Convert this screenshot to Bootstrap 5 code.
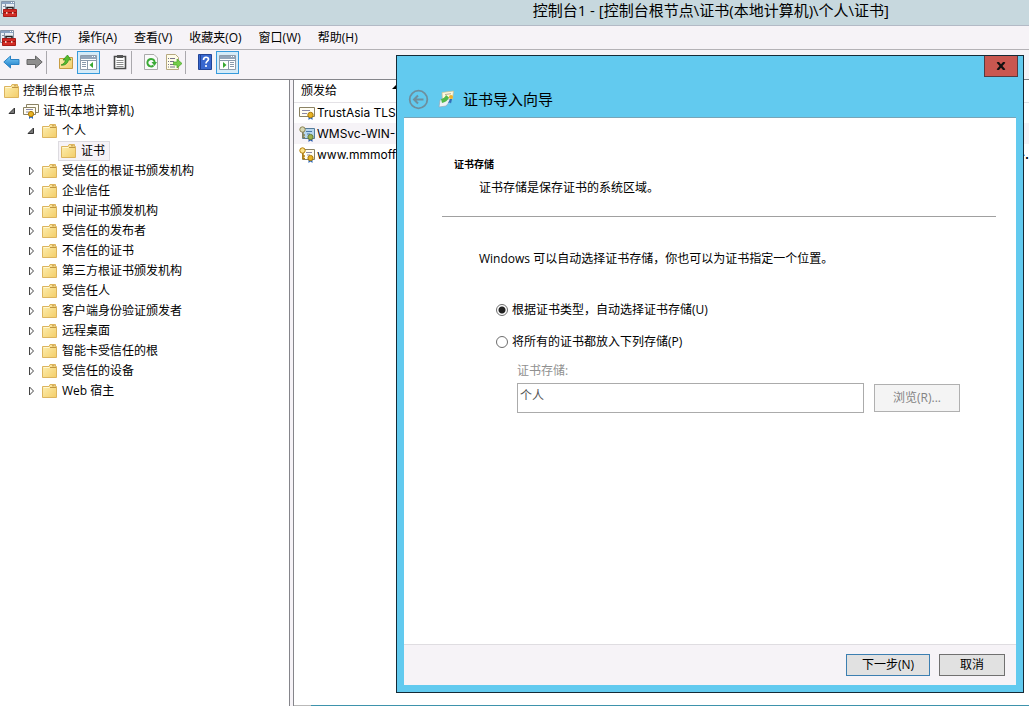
<!DOCTYPE html>
<html lang="zh-CN">
<head>
<meta charset="utf-8">
<meta name="viewport" content="width=device-width, initial-scale=1">
<title>控制台1</title>
<link href="https://cdn.jsdelivr.net/npm/bootstrap@5.3.0/dist/css/bootstrap.min.css" rel="stylesheet">
<style>
  body { font-family: "Open Sans", "Noto Sans CJK SC", sans-serif; font-size: 12px; line-height: 20px; color: #000; background: #fff; }
  button, input { font-family: inherit; }
  svg { display: block; flex: none; }
  .console { min-height: 100vh; }
  .title-strip { height: 26px; padding-left: 1px; background: #c7d8de; border-bottom: 1px solid #b3bac6; }
  .title-text { font-size: 15px; line-height: 20px; margin-right: 140px; }
  .menu-strip { height: 24px; gap: 1px; background: #f6f3f7; border-bottom: 1px solid #b4b2b6; }
  .menu-strip a { color: #000; text-decoration: none; padding: 0 8px; }
  .menu-strip svg { margin-right: -1px; }
  .tool-strip { height: 30px; background: #f6f3f7; border-bottom: 1px solid #85858b; padding-bottom: 5px; }
  .tool { width: 23px; height: 23px; padding: 0; border: 1px solid transparent; background: none; }
  .tool.on { background: #d5ebf8; border-color: #379bdc; }
  .sep { width: 8px; height: 23px; border-left: 1px solid #aaa8ad; }
  .sep.blank { border-color: transparent; }
  .tree-pane { width: 290px; padding-top: 1px; border-right: 1px solid #85858b; }
  .splitter { width: 4px; background: #f6f3f7; border-right: 1px solid #85858b; }
  .tree-pane ul { list-style: none; margin: 0; padding: 0; }
  .tree-pane ul ul { padding-left: 19px; }
  .node { height: 20px; }
  .node > span { padding-left: 5px; }
  .twisty { width: 19px; padding-left: 8px; }
  .picked { width: max-content; margin-left: 20px; padding: 0 4px 0 2px; background: #f6f3f7; border: 1px solid #dddbe0; }
  .cert-table { width: 100%; table-layout: fixed; border-collapse: collapse; white-space: nowrap; }
  .cert-table th { height: 22px; padding: 0 0 0 7px; font-weight: 400; border-bottom: 1px solid #e4e2e6; position: relative; }
  .cert-table td { height: 21px; padding: 0 0 0 5px; line-height: 20px; font-family: Inter, sans-serif; }
  .cert-table td > div { gap: 2px; }
  .cert-table td:last-child { text-align: right; padding: 0; font-weight: 700; }
  .cert-table .alt { background: #f6f3f7; }
  .col-name { width: 210px; }
  .sort { position: absolute; left: 98px; top: 4px; }
  .end-line { height: 1px; background: #3e93ac; border-left: 17px solid #b9b9b9; }
  .wizard { position: absolute; left: 396px; right: 5px; top: 55px; bottom: 13px; background: #62caef; border: 1px solid #152a36; padding: 0 7px 7px; }
  .wizard-head { height: 62px; position: relative; padding: 25px 0 0 4px; border-bottom: 1px solid #77a5b8; }
  .wizard-head h1 { font-size: 15px; line-height: 20px; font-weight: 400; margin: 0; }
  .close-x { position: absolute; right: -2px; top: 0; width: 34px; height: 21px; padding: 0; border: 1px solid #553b42; border-top: 0; background: #c95750; }
  .wizard-body { background: #fff; padding: 38px 20px 0 38px; }
  .wizard-body h2 { font-size: 10px; line-height: 16px; font-weight: 700; margin: 0 0 6px 12px; }
  .hint { margin: 0 0 0 37px; }
  .rule { margin: 18px 0 32px; border: 0; border-top: 1px solid #a0a0a0; opacity: 1; }
  .choices { padding: 31px 0 0 54px; }
  .choices label { padding-left: 4px; }
  .choices input[type=radio] { appearance: none; width: 12px; height: 12px; margin: 0; border: 1px solid #6d6d6d; border-radius: 50%; background: #fff; }
  .choices input[type=radio]:checked { background: radial-gradient(circle, #222 0 3px, #fff 4px); }
  .store { padding: 9px 36px 0 75px; }
  .store > div { gap: 10px; margin-top: 2px; }
  .store label { color: #909090; line-height: 20px; }
  .store-box { height: 30px; border: 1px solid #ababab; background: #fff; color: #555; padding: 0 2px 6px; min-width: 0; border-radius: 0; }
  .cmd { border: 1px solid #707070; background: #e1e1e1; color: #000; height: 22px; width: 66px; padding: 0; line-height: 18px; }
  .cmd.next { width: 84px; border-color: #3c7fb1; }
  .cmd.browse { width: 86px; height: 28px; border-color: #b0b0b0; background: #f4f4f4; color: #838383; }
  .wizard-foot { height: 41px; background: #f6f3f7; border-top: 1px solid #dfdde1; padding: 0 11px 0 0; gap: 9px; }
</style>
</head>
<body>
<svg width="0" height="0" class="position-absolute" aria-hidden="true">
  <defs>
    <linearGradient id="gFolder" x1="0" y1="0" x2="1" y2="1"><stop offset="0" stop-color="#fdf0b4"/><stop offset="1" stop-color="#f3cd68"/></linearGradient>
    <linearGradient id="gBlue" x1="0" y1="0" x2="0" y2="1"><stop offset="0" stop-color="#7fd0fa"/><stop offset="1" stop-color="#1677c4"/></linearGradient>
    <symbol id="folder" viewBox="0 0 15 14"><path d="M.5 2.500h6.500l1-2h5.500v2h1v11H.5z" fill="url(#gFolder)" stroke="#dcb45e"/><path d="M8 3.500h6M10 1.800h2.500" stroke="#b98d3a" stroke-width=".9"/><path d="M1.500 3.500h6" stroke="#fff8d5"/></symbol>
    <symbol id="toolbox" viewBox="0 0 16 18"><path d="M.5 1.500h13v12H.5z" fill="#e9eff5" stroke="#8596a9"/><path d="M1 3h12" stroke="#8ba4c2" stroke-width="2"/><path d="M10 2.500h1M12 2.500h1" stroke="#fff"/><path d="M4.500 4v9M2 6.500h2M2 9.500h2" stroke="#8493a5"/><path d="M6 10V7.500h6V10" fill="none" stroke="#252525" stroke-width="1.500"/><path d="M2.500 9.500h13v7h-13z" fill="#d22b24" stroke="#a81c17"/><path d="M3 12.500h12" stroke="#8f1511"/><path d="M5 12h1.500v2H5zm6 0h1.500v2H11z" fill="#f0c4bb"/></symbol>
    <symbol id="cert" viewBox="0 0 16 16"><path d="M.5 2.500h15v9H.5z" fill="#fffdf3" stroke="#8b8263"/><path d="M3 5.500h8M3 8.500h5" stroke="#8b8aa8"/><path d="M9.500 11v4l2-1.500 2 1.500v-4" fill="#2d68b8"/><circle cx="11.500" cy="10" r="2.700" fill="#e8b324" stroke="#a97908"/></symbol>
    <symbol id="certkey" viewBox="0 0 16 16"><path d="M3.500 2.500h12v10h-12z" fill="#fffdf3" stroke="#8b8263"/><path d="M7 5.500h6M8 8h3" stroke="#8b8aa8"/><path d="M9.500 12v4l2-1.500 2 1.500v-4" fill="#2d68b8"/><circle cx="11.500" cy="11" r="2.600" fill="#e8b324" stroke="#a97908"/><circle cx="3.500" cy="3.500" r="2.700" fill="#fbe28a" stroke="#b37d0c"/><path d="M4 6v6M4 9h2M4 11.500h2" stroke="#b37d0c" stroke-width="1.500"/></symbol>
    <symbol id="certblue" viewBox="0 0 16 16"><path d="M3.500 2.500h12v10h-12z" fill="#b7d6ed" stroke="#557c9a"/><path d="M7 5.500h6M8 8h3" stroke="#4777a7"/><path d="M9.500 12v4l2-1.500 2 1.500v-4" fill="#2458ae"/><circle cx="11.500" cy="11" r="2.600" fill="#9db04d" stroke="#657d34"/><circle cx="3.500" cy="3.500" r="2.700" fill="#d7d7b3" stroke="#8a8354"/><path d="M4 6v6M4 9h2M4 11.500h2" stroke="#8a8354" stroke-width="1.500"/></symbol>
    <symbol id="certs" viewBox="0 0 16 16"><path d="M3.500 1.500h12v8h-12z" fill="#fffdf3" stroke="#8b8263"/><path d="M.5 4.500h12v7H.5z" fill="#fffdf3" stroke="#8b8263"/><path d="M3 6.500h7M3 9h3" stroke="#8b8aa8"/><path d="M6 11v5l2-1.500 2 1.500v-5" fill="#2d68b8"/><circle cx="8" cy="11" r="2.600" fill="#e8b324" stroke="#a97908"/></symbol>
    <symbol id="open" viewBox="0 0 8 8"><path d="M6.500 1v5.500H1z" fill="#777" stroke="#333"/></symbol>
    <symbol id="shut" viewBox="0 0 8 10"><path d="M2.500 1v8L6.500 5z" fill="#fff" stroke="#444"/></symbol>
  </defs>
</svg>

<div class="console d-flex flex-column position-relative">
  <header class="title-strip d-flex align-items-start justify-content-between">
    <svg width="16" height="18"><use href="#toolbox"/></svg>
    <span class="title-text">控制台1 - [控制台根节点\证书(本地计算机)\个人\证书]</span>
  </header>
  <nav class="menu-strip d-flex align-items-center">
    <svg width="16" height="18"><use href="#toolbox"/></svg>
    <a href="#">文件(F)</a><a href="#">操作(A)</a><a href="#">查看(V)</a><a href="#">收藏夹(O)</a><a href="#">窗口(W)</a><a href="#">帮助(H)</a>
  </nav>
  <div class="tool-strip d-flex align-items-center" role="toolbar">
    <button class="tool d-flex align-items-center justify-content-center" aria-label="后退"><svg width="17" height="16" viewBox="0 0 17 16"><path d="M.8 8l6.700-6v3.500H16v5H7.500V14z" fill="url(#gBlue)" stroke="#2a82c4"/></svg></button>
    <button class="tool d-flex align-items-center justify-content-center" aria-label="前进"><svg width="17" height="16" viewBox="0 0 17 16"><path d="M16.200 8l-6.700-6v3.500H1v5h8.500V14z" fill="#8f8f8f" stroke="#666"/></svg></button>
    <span class="sep"></span>
    <button class="tool d-flex align-items-center justify-content-center" aria-label="向上"><svg width="16" height="16" viewBox="0 0 16 16"><path d="M1.500 4.500h6l1.500-1h5.500v11h-13z" fill="url(#gFolder)" stroke="#c79d43"/><path d="M3 11c3-1 4-3 4.500-5L5 6l4.500-5L13 6l-2.500-.2C10 9 7 12 3 11z" fill="#55bb2e" stroke="#2f8a18" stroke-width=".7"/></svg></button>
    <button class="tool on d-flex align-items-center justify-content-center" aria-label="显示控制台树"><svg width="17" height="15" viewBox="0 0 17 15"><path d="M.5.500h16v14H.5z" fill="#fff" stroke="#8f9dac"/><path d="M1 2.500h15" stroke="#93a5b9" stroke-width="3"/><path d="M12 1.500h1M14 1.500h1" stroke="#fff"/><path d="M1 5.500h15M7.500 6v8.500M2 7.500h4M2 9.500h4M2 11.500h4" stroke="#8a9aab"/><path d="M13 7v6L9.500 10z" fill="#37a831"/></svg></button>
    <span class="sep blank"></span>
    <button class="tool d-flex align-items-center justify-content-center" aria-label="粘贴"><svg width="14" height="16" viewBox="0 0 14 16"><path d="M1.500 2.500h11v12h-11z" fill="#fff" stroke="#4b4b4b" stroke-width="1.600"/><path d="M4 1h6v3H4z" fill="#555"/><path d="M3.500 6.500h7M3.500 8.500h7M3.500 10.500h7M3.500 12.500h7" stroke="#8c8c8c"/></svg></button>
    <span class="sep"></span>
    <button class="tool d-flex align-items-center justify-content-center" aria-label="刷新"><svg width="14" height="16" viewBox="0 0 14 16"><path d="M.5.500h9.500l3.500 3.500v11.500H.5z" fill="#fafafa" stroke="#aaa"/><path d="M9.500 11.500A3.700 3.700 0 1 1 10.700 8" fill="none" stroke="#3baa36" stroke-width="2"/><path d="M7.500 8h5.500l-2.500 4z" fill="#3baa36"/></svg></button>
    <button class="tool d-flex align-items-center justify-content-center" aria-label="导出列表"><svg width="16" height="16" viewBox="0 0 16 16"><path d="M.5.500h9l3 3v12H.5z" fill="#fffce9" stroke="#b7a980"/><path d="M2 4.500h1M4 4.500h5M2 7.500h1M4 7.500h4M2 10.500h1M4 10.500h4M2 13h1M4 13h5" stroke="#77728b"/><path d="M7.500 8H11V5l5 4.500-5 4.500v-3H7.500z" fill="#76cd4b" stroke="#49a32a" stroke-width=".7"/></svg></button>
    <span class="sep"></span>
    <button class="tool d-flex align-items-center justify-content-center" aria-label="帮助"><svg width="14" height="16" viewBox="0 0 14 16"><path d="M.5.500h13v15H.5z" fill="#3867cf" stroke="#234496"/><path d="M2.500 1v14" stroke="#203f93"/><path d="M5.500 6c0-3.500 5-3.500 5-.8 0 2-2.500 2-2.500 4.300" fill="none" stroke="#fff" stroke-width="1.700"/><circle cx="8" cy="12" r="1.100" fill="#fff"/></svg></button>
    <button class="tool on d-flex align-items-center justify-content-center" aria-label="显示操作窗格"><svg width="17" height="15" viewBox="0 0 17 15"><path d="M.5.500h16v14H.5z" fill="#fff" stroke="#8f9dac"/><path d="M1 2.500h15" stroke="#93a5b9" stroke-width="3"/><path d="M12 1.500h1M14 1.500h1" stroke="#fff"/><path d="M1 5.500h15M9.500 6v8.500M11 7.500h4M11 9.500h4M11 11.500h4" stroke="#8a9aab"/><path d="M4 7v6l3.500-3z" fill="#37a831"/></svg></button>
  </div>

  <main class="d-flex flex-grow-1">
    <aside class="tree-pane flex-shrink-0">
      <div class="node d-flex align-items-center ps-1"><svg width="15" height="14"><use href="#folder"/></svg><span class="ps-1">控制台根节点</span></div>
      <ul>
        <li>
          <div class="node d-flex align-items-center"><i class="twisty me-1"><svg width="8" height="8"><use href="#open"/></svg></i><svg width="16" height="16"><use href="#certs"/></svg><span class="ps-1">证书(本地计算机)</span></div>
          <ul id="stores">
            <li>
              <div class="node d-flex align-items-center"><i class="twisty me-1"><svg width="8" height="8"><use href="#open"/></svg></i><svg width="15" height="14"><use href="#folder"/></svg><span>个人</span></div>
              <ul><li><div class="node picked d-flex align-items-center"><svg width="15" height="14"><use href="#folder"/></svg><span>证书</span></div></li></ul>
            </li>
          </ul>
        </li>
      </ul>
    </aside>
    <div class="splitter flex-shrink-0"></div>
    <section class="d-flex flex-column flex-grow-1">
      <table class="cert-table">
        <thead><tr><th class="col-name">颁发给<svg class="sort" width="10" height="5"><path d="M0 5l5-5 5 5z"/></svg></th><th></th></tr></thead>
        <tbody>
          <tr><td><div class="d-flex align-items-center"><svg width="16" height="16"><use href="#cert"/></svg>TrustAsia TLS</div></td><td></td></tr>
          <tr class="alt"><td><div class="d-flex align-items-center"><svg width="16" height="16"><use href="#certblue"/></svg>WMSvc-WIN-</div></td><td></td></tr>
          <tr><td><div class="d-flex align-items-center"><svg width="16" height="16"><use href="#certkey"/></svg>www.mmmoff</div></td><td>-.</td></tr>
        </tbody>
      </table>
      <div class="end-line mt-auto"></div>
    </section>
  </main>

  <form class="wizard d-flex flex-column" role="dialog" aria-labelledby="wizardTitle">
    <div class="wizard-head d-flex align-items-center">
      <svg width="21" height="21" viewBox="0 0 21 21" class="me-2"><circle cx="10.500" cy="10.500" r="8.800" fill="none" stroke="#6e8f9e" stroke-width="1.800"/><path d="M15.500 10.500h-9M10 6.500l-4 4 4 4" fill="none" stroke="#6e8f9e" stroke-width="2"/></svg>
      <svg width="18" height="18" viewBox="0 0 18 18" class="me-1"><path d="M5 2.500l11.500-1.500-1 8-10 1.500z" fill="#fff8dd" stroke="#c9bf91" stroke-width=".7"/><path d="M8 4.500l6-.8" stroke="#b5ae97"/><path d="M3 10l6-2 5 2-5 6-7 1z" fill="#eef2f5" stroke="#8fa9b9" stroke-width=".7"/><path d="M4 9c3-.5 4-2 5-4l3 2.500c-1 3-4 5-7 5.500z" fill="#52b94a"/><circle cx="14" cy="7" r="2" fill="#eeb22b"/><path d="M13 9l-2 4 2-.5 1 1 1-4.500" fill="#326eb8"/></svg>
      <h1 id="wizardTitle" class="ps-1">证书导入向导</h1>
      <button type="button" class="close-x d-flex align-items-center justify-content-center" aria-label="关闭"><svg width="10" height="8" viewBox="0 0 10 8"><path d="M1.500 0L8.500 8M8.500 0L1.500 8" stroke="#111" stroke-width="2.200"/></svg></button>
    </div>
    <div class="wizard-body flex-grow-1">
      <h2>证书存储</h2>
      <p class="hint">证书存储是保存证书的系统区域。</p>
      <hr class="rule">
      <p class="hint">Windows 可以自动选择证书存储，你也可以为证书指定一个位置。</p>
      <div class="choices">
        <div class="d-flex align-items-center"><input type="radio" name="mode" id="auto" checked><label for="auto">根据证书类型，自动选择证书存储(U)</label></div>
        <div class="d-flex align-items-center mt-2 pt-1"><input type="radio" name="mode" id="place"><label for="place">将所有的证书都放入下列存储(P)</label></div>
      </div>
      <div class="store">
        <label for="storeName">证书存储:</label>
        <div class="d-flex align-items-center">
          <input class="store-box flex-grow-1" id="storeName" type="text" value="个人" disabled>
          <button type="button" class="cmd browse" disabled>浏览(R)...</button>
        </div>
      </div>
    </div>
    <div class="wizard-foot d-flex align-items-center justify-content-end">
      <button type="button" class="cmd next">下一步(N)</button>
      <button type="button" class="cmd">取消</button>
    </div>
  </form>
</div>
<script src="https://cdn.jsdelivr.net/npm/bootstrap@5.3.0/dist/js/bootstrap.bundle.min.js"></script>
<script>
  const names = ["受信任的根证书颁发机构", "企业信任", "中间证书颁发机构", "受信任的发布者", "不信任的证书", "第三方根证书颁发机构", "受信任人", "客户端身份验证颁发者", "远程桌面", "智能卡受信任的根", "受信任的设备", "Web 宿主"];
  document.getElementById("stores").insertAdjacentHTML("beforeend", names.map(n =>
    `<li><div class="node d-flex align-items-center"><i class="twisty me-1"><svg width="8" height="10"><use href="#shut"/></svg></i><svg width="15" height="14"><use href="#folder"/></svg><span>${n}</span></div></li>`).join(""));
</script>
</body>
</html>
